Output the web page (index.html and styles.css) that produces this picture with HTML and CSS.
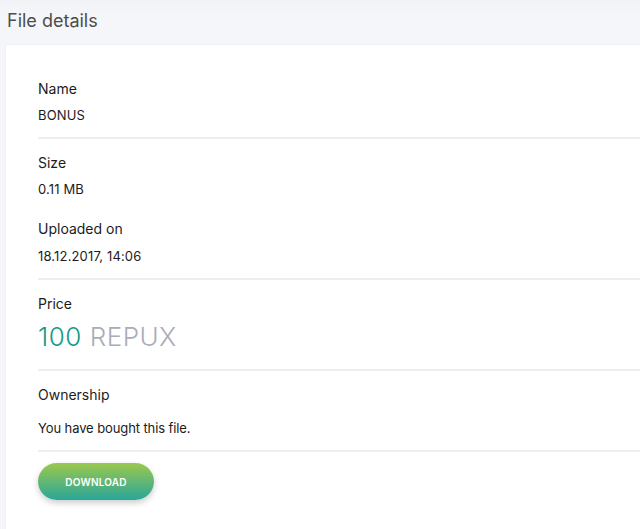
FILE: index.html
```
<!DOCTYPE html>
<html>
<head>
<meta charset="utf-8">
<link rel="stylesheet" href="styles.css">
</head>
<body>
<div class="page">
  <h1 class="title">File details</h1>
  <div class="card">
    <div class="section first">
      <div class="label">Name</div>
      <div class="value">BONUS</div>
    </div>
    <div class="section">
      <div class="label">Size</div>
      <div class="value">0.11 MB</div>
      <div class="label spaced">Uploaded on</div>
      <div class="value">18.12.2017, 14:06</div>
    </div>
    <div class="section">
      <div class="label">Price</div>
      <div class="price"><span class="amount">100</span> <span class="currency">REPUX</span></div>
    </div>
    <div class="section">
      <div class="label">Ownership</div>
      <div class="value own">You have bought this file.</div>
    </div>
    <div class="actions">
      <button class="btn">DOWNLOAD</button>
    </div>
  </div>
</div>
</body>
</html>
```
FILE: styles.css
```
html, body {
  margin: 0;
  padding: 0;
  background: #f4f5f8;
  font-family: Inter, "Open Sans", sans-serif;
  color: #1c1c1c;
}
.page {
  padding: 0 0 0 6px;
  background: linear-gradient(#f2f3f6 0, #f5f6f9 14px, #f5f6f9 100%);
  height: 529px;
  overflow: hidden;
}
.title {
  margin: 0;
  padding: 9px 0 0 1px;
  height: 36px;
  font-size: 18px;
  font-weight: 400;
  line-height: 24px;
  color: #4d4d4d;
}
.card {
  background: #fff;
  box-shadow: 0 0 2px rgba(0, 0, 0, 0.07);
  padding: 20px 0 40px 32px;
  min-height: 600px;
}
.section {
  padding: 14px 0 12px 0;
  border-bottom: 2px solid #eeeeee;
}
.label {
  font-size: 14px;
  line-height: 20px;
  margin-bottom: 6px;
}
.label.spaced {
  margin-top: 20px;
  margin-bottom: 7px;
}
.value {
  font-size: 13px;
  line-height: 20px;
  letter-spacing: 0.15px;
}
.value.own {
  font-size: 13px;
  letter-spacing: -0.1px;
  margin-top: 13px;
}
.price {
  font-size: 26px;
  line-height: 32px;
  font-weight: 300;
  letter-spacing: 0.5px;
  margin-top: 7px;
  margin-bottom: 4px;
}
.amount {
  color: #149b83;
}
.currency {
  color: #a9adba;
}
.actions {
  padding-top: 11px;
}
.btn {
  width: 116px;
  height: 37px;
  border: none;
  border-radius: 19px;
  background: linear-gradient(#9bc84c, #2aa69a);
  color: #fff;
  font-family: Inter, sans-serif;
  font-size: 10px;
  font-weight: 600;
  letter-spacing: 0.2px;
  box-shadow: 0 3px 6px rgba(0, 0, 0, 0.2);
  padding: 0;
}
```
